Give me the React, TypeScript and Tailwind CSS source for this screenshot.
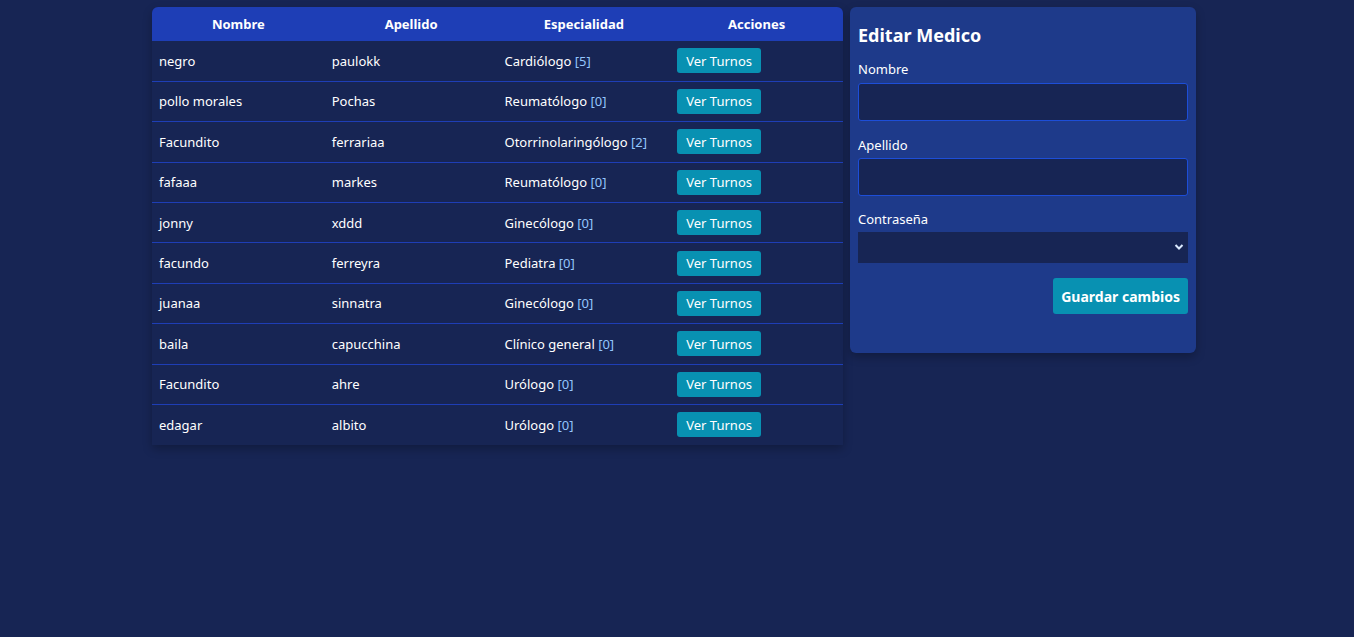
import React from 'react';

type Medico = {
  nombre: string;
  apellido: string;
  especialidad: string;
  turnos: number;
};

const medicos: Medico[] = [
  { nombre: 'negro', apellido: 'paulokk', especialidad: 'Cardiólogo', turnos: 5 },
  { nombre: 'pollo morales', apellido: 'Pochas', especialidad: 'Reumatólogo', turnos: 0 },
  { nombre: 'Facundito', apellido: 'ferrariaa', especialidad: 'Otorrinolaringólogo', turnos: 2 },
  { nombre: 'fafaaa', apellido: 'markes', especialidad: 'Reumatólogo', turnos: 0 },
  { nombre: 'jonny', apellido: 'xddd', especialidad: 'Ginecólogo', turnos: 0 },
  { nombre: 'facundo', apellido: 'ferreyra', especialidad: 'Pediatra', turnos: 0 },
  { nombre: 'juanaa', apellido: 'sinnatra', especialidad: 'Ginecólogo', turnos: 0 },
  { nombre: 'baila', apellido: 'capucchina', especialidad: 'Clínico general', turnos: 0 },
  { nombre: 'Facundito', apellido: 'ahre', especialidad: 'Urólogo', turnos: 0 },
  { nombre: 'edagar', apellido: 'albito', especialidad: 'Urólogo', turnos: 0 },
];

export default function App() {
  return (
    <div className="min-h-screen bg-[#172554] font-['Noto_Sans',sans-serif] text-white">
      <div className="mx-auto flex w-[1050px] items-start gap-[7px] pt-[7px]">
        {/* tabla de medicos */}
        <div className="w-[691px] overflow-hidden rounded-t-md bg-[#172554] shadow-[0_4px_10px_rgba(0,0,0,0.25)]">
          <table className="w-full table-fixed border-collapse text-[13px]">
            <thead>
              <tr className="h-[34px] bg-[#1e3eb6] text-[13px] font-bold">
                <th className="pt-[2px] text-center">Nombre</th>
                <th className="pt-[2px] text-center">Apellido</th>
                <th className="pt-[2px] text-center">Especialidad</th>
                <th className="pt-[2px] text-center">Acciones</th>
              </tr>
            </thead>
            <tbody>
              {medicos.map((m, i) => (
                <tr
                  key={i}
                  className={`h-[40.4px] ${i < medicos.length - 1 ? 'border-b border-[#1e3eb6]' : ''}`}
                >
                  <td className="px-[7px] pt-[1px]">{m.nombre}</td>
                  <td className="px-[7px] pt-[1px]">{m.apellido}</td>
                  <td className="px-[7px] pt-[1px]">
                    {m.especialidad} <span className="text-[#93c5fd]">[{m.turnos}]</span>
                  </td>
                  <td className="px-[7px]">
                    <button className="h-[25px] rounded-[3px] bg-[#0891b2] px-[9px] pt-[1px] text-[13px] text-white">
                      Ver Turnos
                    </button>
                  </td>
                </tr>
              ))}
            </tbody>
          </table>
        </div>

        {/* formulario de edicion */}
        <div className="w-[346px] rounded-md bg-[#1e3a8a] px-2 pt-[16px] pb-[39px] shadow-[0_4px_10px_rgba(0,0,0,0.25)]">
          <h2 className="text-[18px] leading-[24px] font-bold">Editar Medico</h2>
          <div className="mt-[13px]">
            <label className="block text-[13px] leading-[18px]">Nombre</label>
            <input className="mt-[5px] block h-[38px] w-full rounded-[3px] border border-[#1d4ed8] bg-[#172554] px-2 text-white outline-none" />
          </div>
          <div className="mt-[15px]">
            <label className="block text-[13px] leading-[18px]">Apellido</label>
            <input className="mt-[4px] block h-[38px] w-full rounded-[3px] border border-[#1d4ed8] bg-[#172554] px-2 text-white outline-none" />
          </div>
          <div className="mt-[14px]">
            <label className="block text-[13px] leading-[18px]">Contraseña</label>
            <div className="relative mt-[4px] h-[31px] w-full bg-[#172554]">
              <svg
                className="absolute top-[11px] right-[4px]"
                width="10"
                height="8"
                viewBox="0 0 10 8"
              >
                <path d="M1.5 2 L5 5.5 L8.5 2" stroke="#dbeafe" strokeWidth="2" fill="none" />
              </svg>
            </div>
          </div>
          <div className="mt-[15px] flex justify-end">
            <button className="h-[36px] rounded-[3px] bg-[#0891b2] px-[8px] text-[14px] font-bold text-white">
              Guardar cambios
            </button>
          </div>
        </div>
      </div>
    </div>
  );
}
